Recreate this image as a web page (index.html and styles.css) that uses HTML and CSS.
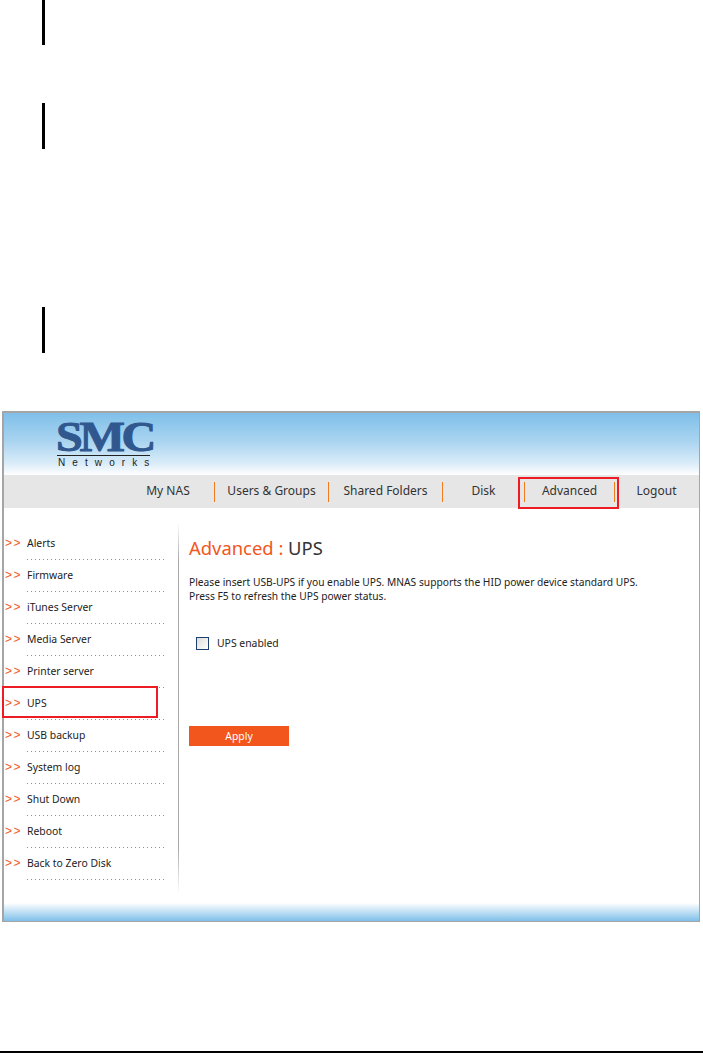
FILE: index.html
```html
<!DOCTYPE html>
<html lang="en">
<head>
<meta charset="utf-8">
<title>Advanced : UPS</title>
<link rel="stylesheet" href="styles.css">
</head>
<body>
<div class="changebars">
  <div class="bar bar-a"></div>
  <div class="bar bar-b"></div>
  <div class="bar bar-c"></div>
</div>
<div class="shot">
  <header class="banner">
    <div class="logo">
      <div class="logo-smc">SMC</div>
      <div class="logo-net">Networks</div>
    </div>
  </header>
  <nav class="nav">
    <span class="tab t1">My NAS</span>
    <span class="tab t2 sep">Users &amp; Groups</span>
    <span class="tab t3 sep">Shared Folders</span>
    <span class="tab t4 sep">Disk</span>
    <span class="tab t5 sep sep-r">Advanced</span>
    <span class="tab t6">Logout</span>
    <span class="hl hl-nav"></span>
  </nav>
  <div class="main">
    <aside class="side">
      <div class="item"><span class="arrows">&gt;&gt;</span><span class="label">Alerts</span></div>
      <div class="item"><span class="arrows">&gt;&gt;</span><span class="label">Firmware</span></div>
      <div class="item"><span class="arrows">&gt;&gt;</span><span class="label">iTunes Server</span></div>
      <div class="item"><span class="arrows">&gt;&gt;</span><span class="label">Media Server</span></div>
      <div class="item"><span class="arrows">&gt;&gt;</span><span class="label">Printer server</span></div>
      <div class="item"><span class="arrows">&gt;&gt;</span><span class="label">UPS</span><span class="hl hl-side"></span></div>
      <div class="item"><span class="arrows">&gt;&gt;</span><span class="label">USB backup</span></div>
      <div class="item"><span class="arrows">&gt;&gt;</span><span class="label">System log</span></div>
      <div class="item"><span class="arrows">&gt;&gt;</span><span class="label">Shut Down</span></div>
      <div class="item"><span class="arrows">&gt;&gt;</span><span class="label">Reboot</span></div>
      <div class="item"><span class="arrows">&gt;&gt;</span><span class="label">Back to Zero Disk</span></div>
    </aside>
    <section class="content">
      <h1 class="title"><span class="title-o">Advanced :</span> UPS</h1>
      <p class="desc">Please insert USB-UPS if you enable UPS. MNAS supports the HID power device standard UPS.<br>Press F5 to refresh the UPS power status.</p>
      <label class="check"><span class="box"></span>UPS enabled</label>
      <div class="apply">Apply</div>
    </section>
  </div>
  <footer class="foot"></footer>
</div>
<div class="rule"></div>
</body>
</html>
```
FILE: styles.css
```css
* { box-sizing: border-box; }
html, body { margin: 0; padding: 0; background: #fff; }
body { width: 703px; height: 1053px; overflow: hidden; position: relative; font-family: "Noto Sans", Tahoma, sans-serif; color: #222; }

.changebars { height: 411px; padding-left: 42px; }
.bar { width: 3px; background: #000; }
.bar-a { height: 45px; }
.bar-b { height: 46px; margin-top: 58px; }
.bar-c { height: 46px; margin-top: 158px; }

.shot { width: 698px; height: 511px; margin-left: 2px; border: 1px solid #a5a5a5; border-top-width: 2px; border-left-width: 2px; background: #fff; display: flex; flex-direction: column; }

.banner { height: 62px; flex: none; background: linear-gradient(#7fbfe9 0%, #a9d4f0 45%, #d8ebf8 80%, #fff 100%); padding: 8px 0 0 52px; }
.logo { width: 98px; }
.logo-smc { font-family: "Liberation Serif", serif; font-weight: 700; font-size: 43px; line-height: 32px; height: 32px; letter-spacing: -3px; color: #31578f; transform: scaleX(1.12); transform-origin: left; -webkit-text-stroke: 1px #31578f; }
.logo-net { border-top: 1px solid #222; margin: 2px 0 0 1px; width: 93px; font-family: "Liberation Sans", sans-serif; font-size: 10px; line-height: 11px; letter-spacing: 7.1px; color: #222; padding: 1px 0 0 1px; white-space: nowrap; }

.nav { height: 33px; flex: none; background: #e6e6e6; position: relative; display: flex; align-items: center; font-size: 12px; color: #333; }
.tab { display: block; height: 20px; line-height: 18px; text-align: center; flex: none; white-space: nowrap; }
.sep { border-left: 1px solid #f07a1e; }
.sep-r { border-right: 1px solid #f07a1e; }
.t1 { margin-left: 120px; width: 88px; margin-right: 2px; }
.t2 { width: 114px; }
.t3 { width: 114px; }
.t4 { width: 82px; }
.t5 { width: 91px; }
.t6 { width: 83px; }
.hl { position: absolute; border: 2px solid #ed1c24; pointer-events: none; }
.hl-nav { left: 514px; top: 2px; width: 101px; height: 32px; }

.main { flex: 1; display: flex; min-height: 0; }
.side { width: 175px; flex: none; padding-top: 27px; border-right: 1px solid; border-image: linear-gradient(#fff 4%, #a8a8a8 14%, #a8a8a8 88%, #fff 100%) 1; font-size: 10.4px; margin-bottom: 10px; }
.item { position: relative; height: 32px; display: flex; }
.arrows { width: 23px; flex: none; padding-left: 1px; color: #f2561d; font-family: "Liberation Sans", sans-serif; font-size: 12px; line-height: 16px; height: 16px; letter-spacing: 1.6px; white-space: nowrap; }
.label { display: block; width: 140px; height: 25px; line-height: 16px; color: #222; white-space: nowrap; background: repeating-linear-gradient(90deg, #8f8f8f 0 1px, transparent 1px 4px) left bottom / 100% 1px no-repeat; }
.hl-side { left: -2px; top: -9px; width: 156px; height: 32px; }

.content { flex: 1; padding: 28px 0 0 10px; position: relative; }
.title { margin: 0; font-weight: 400; font-size: 18.4px; line-height: 24px; color: #333; }
.title-o { color: #f2561d; }
.desc { margin: 15px 0 0; font-size: 10.24px; line-height: 14px; color: #222; white-space: nowrap; }
.check { display: flex; align-items: center; margin: 33px 0 0 7px; font-size: 10.4px; line-height: 14px; color: #222; }
.box { width: 13px; height: 13px; margin-right: 8px; border: 1px solid #1c3f73; background: linear-gradient(135deg, #dcdcd6, #fff); }
.apply { width: 100px; height: 20px; margin-top: 76px; background: #f2561d; color: #fff; font-size: 10.4px; line-height: 20px; text-align: center; }

.foot { height: 18px; flex: none; background: linear-gradient(#fff 0%, #7fbfe9 100%); }

.rule { position: absolute; left: 0; right: 0; top: 1051px; height: 2px; background: #000; }
```
